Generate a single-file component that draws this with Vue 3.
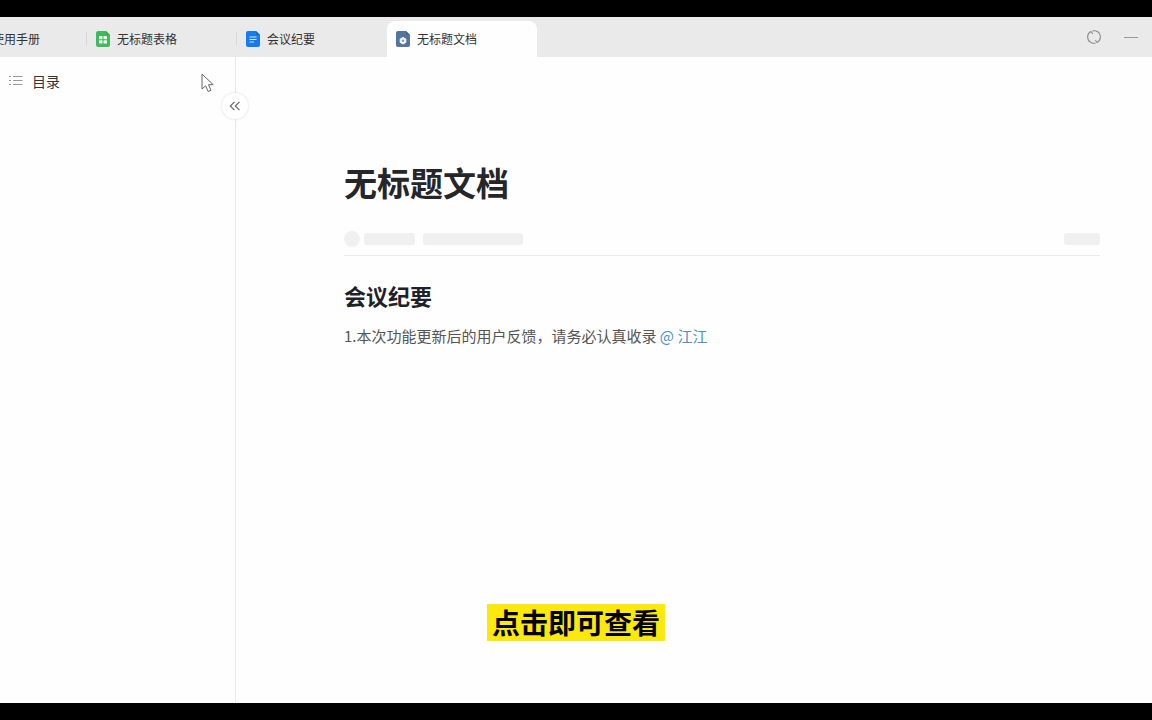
<script setup>
const tabs = [
  { name: '使用手册', kind: 'cut' },
  { name: '无标题表格', kind: 'sheet' },
  { name: '会议纪要', kind: 'text' },
  { name: '无标题文档', kind: 'cloud', active: true },
]
</script>

<template>
  <div class="screen">
    <header class="bar">
      <nav class="tabs" aria-label="文档标签">
        <button
          v-for="tab in tabs"
          :key="tab.name"
          type="button"
          class="tab"
          :class="[tab.kind, { active: tab.active }]"
        >
          <svg v-if="tab.kind !== 'cut'" class="file" viewBox="0 0 14 16" aria-hidden="true">
            <path class="sheet-body" d="M2 0H10L14 4V14a2 2 0 0 1-2 2H2a2 2 0 0 1-2-2V2a2 2 0 0 1 2-2Z" />
            <path class="fold" d="M10 0L14 4H11a1 1 0 0 1-1-1Z" />
            <g v-if="tab.kind === 'sheet'" fill="#e9fbe9">
              <rect x="3" y="5" width="3.500" height="3.300" rx=".6" />
              <rect x="7.500" y="5" width="3.500" height="3.300" rx=".6" />
              <rect x="3" y="9.200" width="3.500" height="3.300" rx=".6" />
              <rect x="7.500" y="9.200" width="3.500" height="3.300" rx=".6" />
            </g>
            <path v-else-if="tab.kind === 'text'" d="M3.500 6H10.500M3.500 8.500H10.500M3.500 11H8" stroke="#d5eaff" stroke-width="1.100" />
            <g v-else>
              <path d="M7 6.500L9.800 8V11.400L7 13L4.200 11.400V8Z" fill="#f4f8fc" stroke="#f4f8fc" stroke-width="1" stroke-linejoin="round" />
              <circle cx="7" cy="9.700" r="1.200" fill="#7c9bc0" />
            </g>
          </svg>
          <span>{{ tab.name }}</span>
        </button>
      </nav>
      <div class="tools">
        <button type="button" class="tool" aria-label="刷新">
          <svg viewBox="0 0 14 14" width="14" height="14" fill="none" stroke="#8b8b8b" stroke-width="1.100">
            <path d="M3.800 1.600A6.200 6.200 0 0 0 5 12.900M10.200 12.400A6.200 6.200 0 0 0 9 1.100M5.600 .9A6.200 6.200 0 0 1 9 1.100M8.400 13.100A6.200 6.200 0 0 1 5 12.900" />
            <path d="M3.800 1.200L5.700 3.900M10.200 12.800L8.300 10.100" />
          </svg>
        </button>
        <button type="button" class="tool" aria-label="最小化">
          <svg viewBox="0 0 14 14" width="14" height="14"><path d="M0 7.500H14" stroke="#9a9a9a" /></svg>
        </button>
      </div>
    </header>

    <div class="body">
      <aside class="side">
        <div class="toc">
          <svg viewBox="0 0 14 12" width="14" height="12" stroke="#999" aria-hidden="true">
            <path d="M0 1.500H2M4 1.500H13.500M0 5.500H2M4 5.500H13.500M0 9.500H2M4 9.500H13.500" />
          </svg>
          <span>目录</span>
        </div>
        <button type="button" class="collapse" aria-label="收起目录">
          <svg viewBox="0 0 12 10" width="12" height="10" fill="none" stroke="#666" stroke-width="1.200">
            <path d="M5.500 .8L1.300 5L5.500 9.200M10.500 .8L6.300 5L10.500 9.200" />
          </svg>
        </button>
        <svg class="cursor" viewBox="0 0 14 20" width="14" height="20" aria-hidden="true">
          <path d="M1 1V16L4.600 12.800L7.200 18.500L10 17.300L7.500 11.700H12.200Z" fill="#fff" stroke="#666" stroke-linejoin="round" />
        </svg>
      </aside>

      <main class="doc">
        <h1>无标题文档</h1>
        <div class="meta" aria-hidden="true">
          <i class="avatar"></i>
          <i class="bone author"></i>
          <i class="bone time"></i>
          <i class="bone count"></i>
        </div>
        <h2>会议纪要</h2>
        <p>1.本次功能更新后的用户反馈，请务必认真收录 <a href="#">@ 江江</a></p>
      </main>
    </div>
    <div class="caption">点击即可查看</div>
  </div>
</template>

<style>
body {
  margin: 0;
  background: #000;
}
</style>

<style scoped>
.screen {
  position: relative;
  box-sizing: border-box;
  display: flex;
  flex-direction: column;
  min-height: 100vh;
  padding: 17px 0;
  background: #000;
  color: #333;
  font-family: "Noto Sans CJK SC", "Noto Sans", sans-serif;
  overflow: hidden;
}
button {
  padding: 0;
  border: 0;
  background: none;
  color: inherit;
  font: inherit;
}
.bar {
  display: flex;
  justify-content: space-between;
  height: 40px;
  background: #eaeaea;
}
.tabs {
  display: flex;
  align-items: flex-end;
}
.tab {
  position: relative;
  box-sizing: border-box;
  display: flex;
  align-items: center;
  gap: 7px;
  width: 150px;
  height: 36px;
  padding-left: 9px;
  font-size: 12px;
  line-height: 18px;
  white-space: nowrap;
}
.tab.cut {
  justify-content: flex-end;
  width: 87px;
  padding: 0 47px 0 0;
  overflow: hidden;
}
.tab.cut::after,
.tab.sheet::after {
  content: "";
  position: absolute;
  right: 0;
  top: 11px;
  width: 1px;
  height: 14px;
  background: #d8d8d8;
}
.tab.active {
  border-radius: 8px 8px 0 0;
  background: #fefefe;
}
.file {
  width: 14px;
  height: 16px;
}
.sheet .sheet-body { fill: #43b95e; }
.sheet .fold { fill: #38ab53; }
.text .sheet-body { fill: #147cf0; }
.text .fold { fill: #0c69d2; }
.cloud .sheet-body { fill: #54759c; }
.cloud .fold { fill: #45658b; }
.tools {
  display: flex;
  align-items: center;
  gap: 23px;
  padding-right: 14px;
}
.tool {
  display: flex;
}
.body {
  flex: 1;
  display: flex;
  background: #fefefe;
}
.side {
  position: relative;
  box-sizing: border-box;
  flex: none;
  width: 236px;
  padding: 14px 9px;
  border-right: 1px solid #e8e8e8;
}
.toc {
  display: flex;
  align-items: center;
  gap: 9px;
  font-size: 14px;
  line-height: 20px;
}
.collapse {
  position: absolute;
  top: 36px;
  right: -13px;
  display: flex;
  align-items: center;
  justify-content: center;
  width: 26px;
  height: 26px;
  border-radius: 50%;
  background: #fff;
  box-shadow: 0 0 3px rgba(0, 0, 0, 0.15);
}
.cursor {
  position: absolute;
  top: 16px;
  left: 201px;
}
.doc {
  flex: 1;
  min-width: 0;
  padding: 101px 52px 0 108px;
}
h1 {
  margin: 0;
  color: #252629;
  font-size: 33px;
  line-height: 48px;
  font-weight: 700;
}
.meta {
  display: flex;
  align-items: center;
  height: 16px;
  padding: 25px 0 8px;
  border-bottom: 1px solid #ebebeb;
}
.avatar {
  width: 16px;
  height: 16px;
  border-radius: 50%;
  background: #f0f0f0;
}
.bone {
  height: 12px;
  border-radius: 3px;
  background: #f0f0f0;
}
.author {
  width: 51px;
  margin-left: 4px;
}
.time {
  width: 100px;
  margin-left: 8px;
}
.count {
  width: 36px;
  margin-left: auto;
}
h2 {
  margin: 23px 0 10px;
  color: #202126;
  font-size: 22px;
  line-height: 32px;
  font-weight: 700;
}
p {
  margin: 0;
  color: #555;
  font-size: 15px;
  line-height: 30px;
}
a {
  color: #4a90c8;
  text-decoration: none;
}
.caption {
  position: absolute;
  bottom: 79px;
  left: 50%;
  transform: translateX(-50%);
  padding: 0 5px;
  background: #fbe80c;
  color: #000;
  font-size: 28px;
  line-height: 37px;
  font-weight: 700;
  white-space: nowrap;
}
</style>
